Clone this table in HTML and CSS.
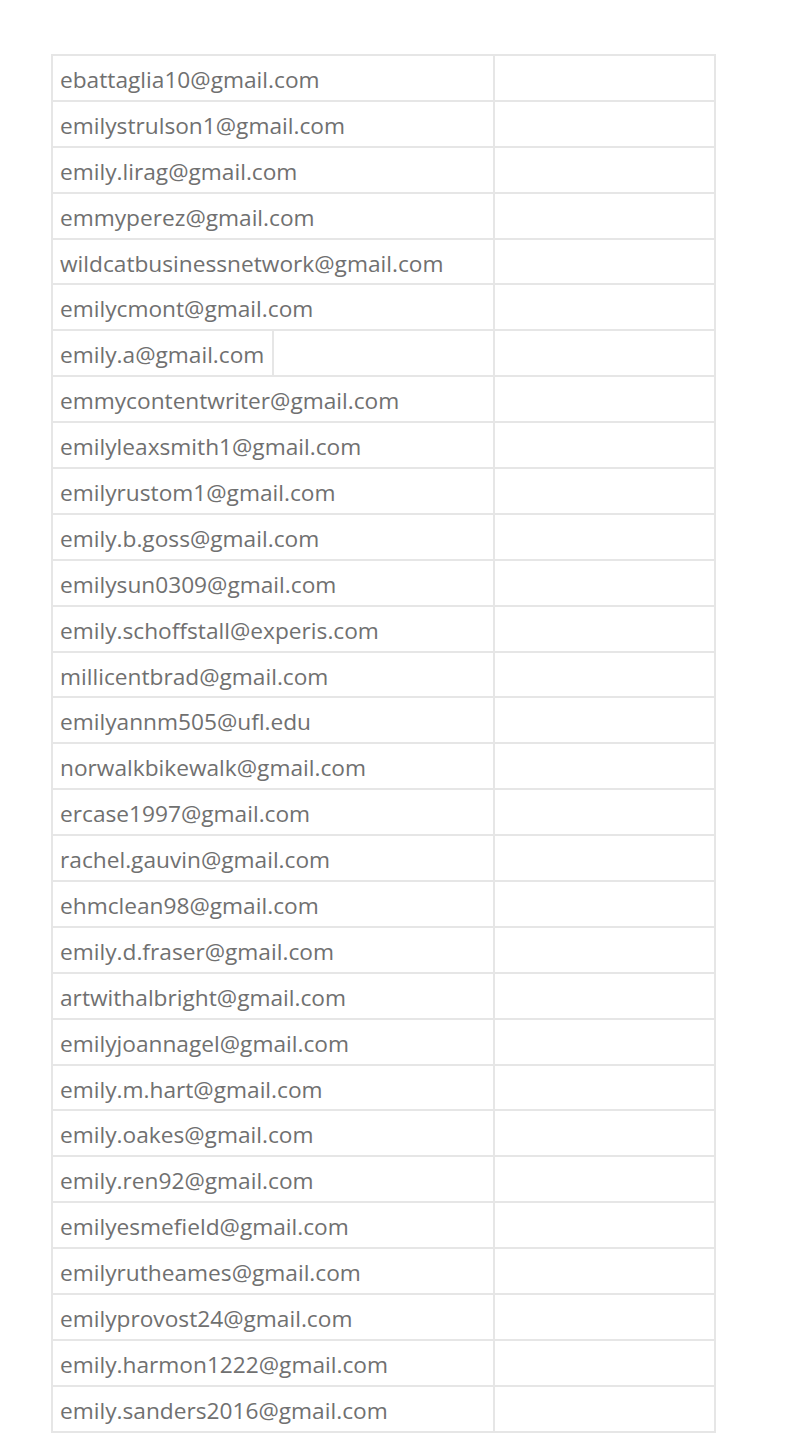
FILE: index.html
```html
<!DOCTYPE html>
<html lang="en">
<head>
    <meta charset="UTF-8">
    <meta name="viewport" content="width=device-width, initial-scale=1.0">
    <title>Emails</title>
    <link rel="stylesheet" href="styles.css">
</head>
<body>

<table class="emails">
    <colgroup>
        <col class="col-a">
        <col class="col-b">
        <col class="col-c">
    </colgroup>
    <tr><td colspan="2">ebattaglia10@gmail.com</td><td></td></tr>
    <tr><td colspan="2">emilystrulson1@gmail.com</td><td></td></tr>
    <tr><td colspan="2">emily.lirag@gmail.com</td><td></td></tr>
    <tr><td colspan="2">emmyperez@gmail.com</td><td></td></tr>
    <tr><td colspan="2">wildcatbusinessnetwork@gmail.com</td><td></td></tr>
    <tr><td colspan="2">emilycmont@gmail.com</td><td></td></tr>
    <tr><td>emily.a@gmail.com</td><td></td><td></td></tr>
    <tr><td colspan="2">emmycontentwriter@gmail.com</td><td></td></tr>
    <tr><td colspan="2">emilyleaxsmith1@gmail.com</td><td></td></tr>
    <tr><td colspan="2">emilyrustom1@gmail.com</td><td></td></tr>
    <tr><td colspan="2">emily.b.goss@gmail.com</td><td></td></tr>
    <tr><td colspan="2">emilysun0309@gmail.com</td><td></td></tr>
    <tr><td colspan="2">emily.schoffstall@experis.com</td><td></td></tr>
    <tr><td colspan="2">millicentbrad@gmail.com</td><td></td></tr>
    <tr><td colspan="2">emilyannm505@ufl.edu</td><td></td></tr>
    <tr><td colspan="2">norwalkbikewalk@gmail.com</td><td></td></tr>
    <tr><td colspan="2">ercase1997@gmail.com</td><td></td></tr>
    <tr><td colspan="2">rachel.gauvin@gmail.com</td><td></td></tr>
    <tr><td colspan="2">ehmclean98@gmail.com</td><td></td></tr>
    <tr><td colspan="2">emily.d.fraser@gmail.com</td><td></td></tr>
    <tr><td colspan="2">artwithalbright@gmail.com</td><td></td></tr>
    <tr><td colspan="2">emilyjoannagel@gmail.com</td><td></td></tr>
    <tr><td colspan="2">emily.m.hart@gmail.com</td><td></td></tr>
    <tr><td colspan="2">emily.oakes@gmail.com</td><td></td></tr>
    <tr><td colspan="2">emily.ren92@gmail.com</td><td></td></tr>
    <tr><td colspan="2">emilyesmefield@gmail.com</td><td></td></tr>
    <tr><td colspan="2">emilyrutheames@gmail.com</td><td></td></tr>
    <tr><td colspan="2">emilyprovost24@gmail.com</td><td></td></tr>
    <tr><td colspan="2">emily.harmon1222@gmail.com</td><td></td></tr>
    <tr><td colspan="2">emily.sanders2016@gmail.com</td><td></td></tr>
</table>

</body>
</html>
```

FILE: styles.css
```css
body {
    margin: 0;
    padding: 54px 0 0 51px;
    background-color: #fff;
    font-family: "Open Sans", "Liberation Sans", sans-serif;
}

.emails {
    border-collapse: collapse;
    table-layout: fixed;
    width: 665px;
}

.col-a {
    width: 221px;
}

.col-b {
    width: 221px;
}

.col-c {
    width: 221px;
}

.emails td {
    border: 2px solid #e6e6e6;
    height: 40.9px;
    padding: 3px 7px 0;
    font-size: 22.7px;
    color: #707070;
    white-space: nowrap;
    vertical-align: middle;
}
```
